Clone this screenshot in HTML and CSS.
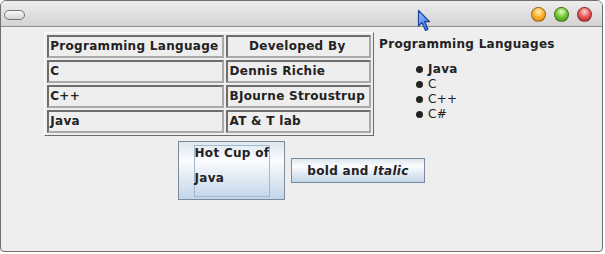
FILE: index.html
```html
<!DOCTYPE html>
<html>
  <head>
    <meta charset="UTF-8">
    <title>Hot Cup of Java</title>
    <link rel="stylesheet" href="styles.css">
  </head>
  <body>
    <div class="window">
      <div class="titlebar">
        <span class="pill"></span>
        <div class="lights">
          <span class="light orange"></span>
          <span class="light green"></span>
          <span class="light red"></span>
        </div>
      </div>

      <div class="content">
        <div class="flow-row top-row">
          <table class="langs">
            <tr>
              <th>Programming Language</th>
              <th>Developed By</th>
            </tr>
            <tr>
              <td>C</td>
              <td>Dennis Richie</td>
            </tr>
            <tr>
              <td>C++</td>
              <td>BJourne Stroustrup</td>
            </tr>
            <tr>
              <td>Java</td>
              <td>AT &amp; T lab</td>
            </tr>
          </table>

          <div class="list-label">
            <div class="list-title">Programming Languages</div>
            <ul class="lang-list">
              <li class="strong">Java</li>
              <li>C</li>
              <li>C++</li>
              <li>C#</li>
            </ul>
          </div>
        </div>

        <div class="flow-row button-row">
          <button class="btn btn-tall">
            <span class="focus-ring">
              <span class="line">Hot Cup of</span>
              <span class="line second">Java</span>
            </span>
          </button>
          <button class="btn btn-small">bold and <i>Italic</i></button>
        </div>
      </div>

      <!-- mouse pointer sitting over the title bar -->
      <svg class="cursor" width="14" height="24" viewBox="0 0 14 24">
        <defs>
          <linearGradient id="arrow-fill" x1="0" y1="0" x2="1" y2="1">
            <stop offset="0" stop-color="#9cc4ff"/>
            <stop offset="1" stop-color="#2f6fe0"/>
          </linearGradient>
        </defs>
        <path d="M1.5 1.5 L1.5 17 L5 13.5 L8.5 21.5 L11 20.3 L7.6 12.6 L12.5 12.6 Z"
              fill="url(#arrow-fill)" stroke="#1a3f9c" stroke-width="1.2" stroke-linejoin="round"/>
      </svg>
    </div>
  </body>
</html>
```

FILE: styles.css
```css
body {
  margin: 0;
  background: #ffffff;
  font-family: "DejaVu Sans", "Liberation Sans", sans-serif;
  font-size: 12px;
  color: #222222;
}

.window {
  position: relative;
  width: 601px;
  height: 250px;
  border: 1px solid #6f6f6f;
  border-radius: 6px 6px 4px 4px;
  background: #eeeeee;
  overflow: hidden;
}

.titlebar {
  height: 25px;
  display: flex;
  align-items: center;
  justify-content: space-between;
  padding: 0 10px 0 3px;
  background: linear-gradient(#ededed, #d3d3d3);
  border-bottom: 1px solid #8c8c8c;
}

.pill {
  width: 19px;
  height: 8px;
  border: 1px solid #747474;
  border-radius: 5px;
  background: linear-gradient(#f8f8f8, #d2d2d2);
  margin-top: 2px;
}

.lights {
  display: flex;
  gap: 8px;
  margin-top: 2px;
}

.light {
  width: 13px;
  height: 13px;
  border-radius: 50%;
  border: 1px solid rgba(0, 0, 0, 0.35);
}

.orange {
  background: radial-gradient(circle at 50% 30%, #fff3c0 0, #ffb52e 45%, #d27800 100%);
}

.green {
  background: radial-gradient(circle at 50% 30%, #e6ffc8 0, #78c93a 45%, #3c8c12 100%);
}

.red {
  background: radial-gradient(circle at 50% 30%, #ffd8d8 0, #ea5a5a 45%, #b01c1c 100%);
}

.content {
  display: flex;
  flex-direction: column;
  padding-top: 5px;
  gap: 5px;
}

.flow-row {
  display: flex;
  justify-content: center;
  gap: 5px;
}

.top-row {
  align-items: flex-start;
  margin-left: -4px;
}

.button-row {
  align-items: center;
  gap: 6px;
}

/* table */

.langs {
  border-collapse: separate;
  border-spacing: 2px;
  border: 1px solid;
  border-color: #ffffff #6a6a6a #6a6a6a #ffffff;
  font-weight: bold;
  letter-spacing: 0.3px;
}

.langs th,
.langs td {
  height: 19px;
  padding: 0 4px 0 1px;
  border: 2px solid;
  border-color: #6e6e6e #a9a9a9 #a9a9a9 #6e6e6e;
  line-height: 19px;
  white-space: nowrap;
}

.langs th {
  text-align: center;
}

.langs td {
  text-align: left;
}

/* bulleted label */

.list-label {
  padding-top: 4px;
  letter-spacing: 0.3px;
}

.list-title {
  font-weight: bold;
  line-height: 16px;
  margin-bottom: 10px;
}

.lang-list {
  list-style: none;
  margin: 0;
  padding-left: 37px;
}

.lang-list li {
  line-height: 15px;
  display: flex;
  align-items: center;
}

.lang-list li::before {
  content: "";
  width: 7px;
  height: 7px;
  border-radius: 50%;
  background: #222222;
  margin-right: 5px;
}

.lang-list .strong {
  font-weight: bold;
}

/* buttons */

.btn {
  font-family: inherit;
  font-size: 12px;
  font-weight: bold;
  letter-spacing: 0.3px;
  color: #222222;
  border: 1px solid #7a8a9b;
  border-radius: 0;
  background: linear-gradient(#dde7f1 0%, #fbfcfe 32%, #c3d5e9 100%);
  padding: 0;
}

.btn-tall {
  width: 107px;
  height: 59px;
  display: flex;
  justify-content: center;
  align-items: center;
}

.focus-ring {
  display: block;
  width: 74px;
  height: 50px;
  border: 1px solid #a4b8cd;
  text-align: left;
}

.focus-ring .line {
  display: block;
  line-height: 15px;
  white-space: nowrap;
}

.focus-ring .second {
  margin-top: 10px;
}

.btn-small {
  width: 134px;
  height: 25px;
  text-align: center;
}

.cursor {
  position: absolute;
  left: 416px;
  top: 8px;
}
```
